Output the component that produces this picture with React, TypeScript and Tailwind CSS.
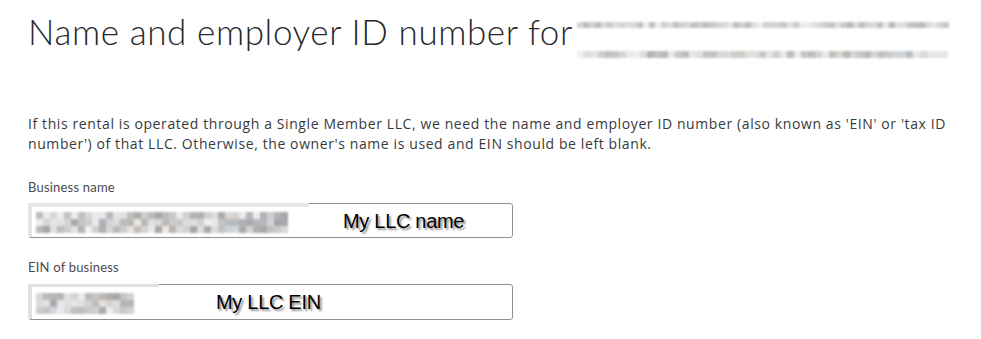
import React from "react";

function rand(seed: number) {
  let s = seed;
  return () => {
    s = (s * 9301 + 49297) % 233280;
    return s / 233280;
  };
}

function Mosaic({
  cols,
  rows,
  cell,
  seed,
  min,
  max,
  blur,
}: {
  cols: number;
  rows: number;
  cell: number;
  seed: number;
  min: number;
  max: number;
  blur: string;
}) {
  const r = rand(seed);
  const cells: React.ReactNode[] = [];
  for (let y = 0; y < rows; y++) {
    for (let x = 0; x < cols; x++) {
      const v = Math.round(min + (max - min) * r());
      const tint = Math.round((r() - 0.5) * 10);
      cells.push(
        <div
          key={`${x}-${y}`}
          style={{
            width: cell,
            height: cell,
            background: `rgb(${v + tint},${v},${v - tint})`,
          }}
        />
      );
    }
  }
  return (
    <div
      className={`grid ${blur}`}
      style={{ gridTemplateColumns: `repeat(${cols}, ${cell}px)` }}
    >
      {cells}
    </div>
  );
}

export default function App() {
  return (
    <div className="min-h-[339px] w-[981px] bg-white pl-[28px] text-[#393a3d] [font-family:Lato,'Open_Sans',sans-serif]">
      <div className="flex items-start pt-[10px]">
        <h1 className="text-[35px] font-light leading-[42px] tracking-[0.6px] whitespace-nowrap text-[#26282c]">
          Name and employer ID number for
        </h1>
        <div className="ml-[4px] mt-[12px] flex h-[38px] w-[372px] flex-col justify-between bg-white">
          <Mosaic cols={62} rows={1} cell={6} seed={7} min={185} max={240} blur="blur-[1.2px]" />
          <div className="mb-[2px]">
            <Mosaic cols={53} rows={1} cell={7} seed={19} min={180} max={240} blur="blur-[1.2px]" />
          </div>
        </div>
      </div>

      <p className="mt-[54px] w-[945px] text-[14px] leading-[20px] tracking-[0.6px] [font-family:'Open_Sans',sans-serif]">
        If this rental is operated through a Single Member LLC, we need the name and employer ID number (also known as 'EIN' or 'tax ID number') of that LLC. Otherwise, the owner's name is used and EIN should be left blank.
      </p>

      <div className="mt-[25px] text-[13px] leading-[16px] tracking-[0.2px] text-[#4a4b50]">Business name</div>
      <div className="relative mt-[8px] flex h-[35px] w-[485px] items-center rounded-[3px] border border-[#8d9096] bg-white">
        <div className="absolute -left-px -top-px flex h-[34px] w-[281px] items-center border-l-4 border-t-4 border-[#e3e5e7] bg-white pl-[4px]">
          <Mosaic cols={36} rows={3} cell={7} seed={3} min={165} max={240} blur="blur-[1px]" />
        </div>
        <span className="ml-[314px] text-[20px] tracking-[-0.3px] text-black [font-family:'Liberation_Sans',Arial,sans-serif] [text-shadow:2px_2px_2px_rgba(0,0,0,0.45)]">
          My LLC name
        </span>
      </div>

      <div className="mt-[21px] text-[13px] leading-[16px] tracking-[0.2px] text-[#4a4b50]">EIN of business</div>
      <div className="relative mt-[9px] flex h-[36px] w-[485px] items-center rounded-[3px] border border-[#8d9096] bg-white">
        <div className="absolute -left-px -top-px flex h-[35px] w-[131px] items-center border-l-4 border-t-[3px] border-[#dfe1e3] bg-white pl-[4px]">
          <Mosaic cols={14} rows={3} cell={7} seed={11} min={165} max={240} blur="blur-[1px]" />
        </div>
        <span className="ml-[187px] text-[20px] tracking-[-0.3px] text-black [font-family:'Liberation_Sans',Arial,sans-serif] [text-shadow:2px_2px_2px_rgba(0,0,0,0.45)]">
          My LLC EIN
        </span>
      </div>
    </div>
  );
}
